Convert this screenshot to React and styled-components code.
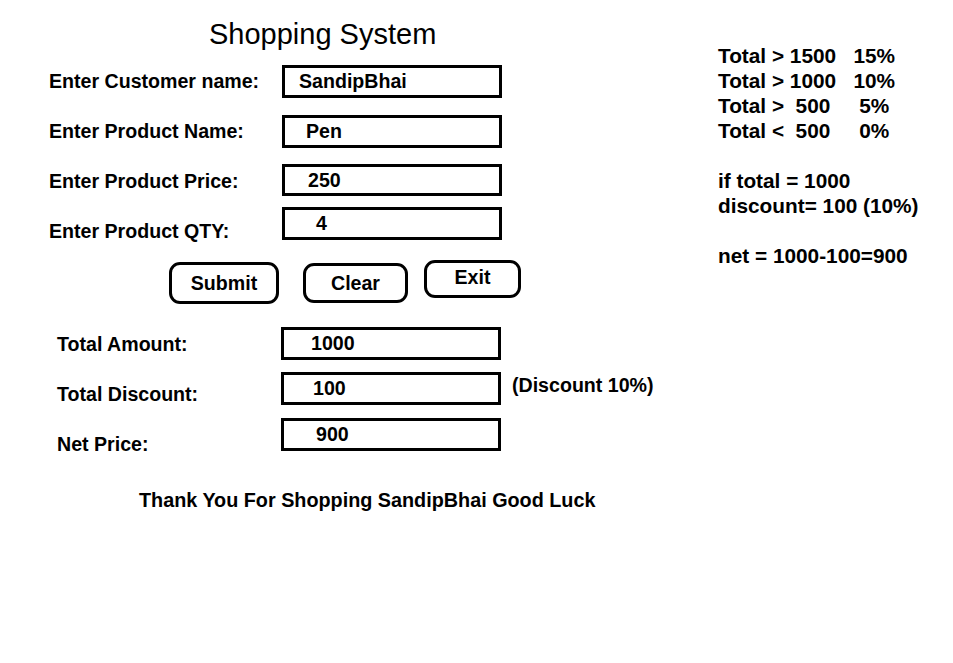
import React from 'react';
import styled, { createGlobalStyle } from 'styled-components';

const GlobalStyle = createGlobalStyle`
  html, body {
    margin: 0;
    padding: 0;
    background: #fff;
  }
  body {
    font-family: "Liberation Sans", Arial, sans-serif;
    color: #000;
  }
`;

const Page = styled.div`
  width: 953px;
  height: 663px;
  display: flex;
  background: #fff;
`;

const FormColumn = styled.div`
  width: 700px;
  display: flex;
  flex-direction: column;
`;

const Title = styled.h1`
  margin: 18px 0 6px 209px;
  height: 32px;
  font-size: 29px;
  line-height: 32px;
  font-weight: normal;
`;

const Row = styled.div`
  height: 50px;
  display: flex;
  align-items: center;
  padding-left: ${p => p.$indent}px;
`;

const Label = styled.span`
  width: ${p => p.$width}px;
  font-size: 19.6px;
  font-weight: bold;
`;

const Field = styled.div`
  width: 220px;
  height: ${p => p.$height || 33}px;
  box-sizing: border-box;
  border: 3px solid #000;
  display: flex;
  align-items: center;
  padding-left: ${p => p.$pad}px;
  font-size: 19.6px;
  font-weight: bold;
  transform: translateY(${p => p.$shift || 0}px);
`;

const Note = styled.span`
  margin-left: 11px;
  font-size: 19.6px;
  font-weight: bold;
  transform: translateY(-9px);
`;

const ButtonRow = styled.div`
  height: 63px;
  display: flex;
  align-items: flex-start;
  padding-left: 169px;
`;

const Button = styled.button`
  width: ${p => p.$w}px;
  height: ${p => p.$h}px;
  margin-top: ${p => p.$top}px;
  margin-left: ${p => p.$gap || 0}px;
  box-sizing: border-box;
  border: 3px solid #000;
  border-radius: 11px;
  background: #fff;
  font-family: "Liberation Sans", Arial, sans-serif;
  font-size: 19.6px;
  font-weight: bold;
  color: #000;
  padding: 0 0 ${p => p.$lift || 0}px;
`;

const Thanks = styled.p`
  margin: 18px 0 0 139px;
  font-size: 19.8px;
  font-weight: bold;
  line-height: 26px;
`;

const Rules = styled.div`
  padding: 43px 0 0 18px;
  font-size: 20.8px;
  font-weight: bold;
  line-height: 25px;
  white-space: pre;
`;

const RuleLine = styled.div`
  height: 25px;
`;

const inputs = [
  { label: 'Enter Customer name:', value: 'SandipBhai', pad: 14 },
  { label: 'Enter Product Name:', value: 'Pen', pad: 21 },
  { label: 'Enter Product Price:', value: '250', pad: 23, height: 32, shift: -1 },
  { label: 'Enter Product QTY:', value: '4', pad: 31, shift: -8 },
];

const results = [
  { label: 'Total Amount:', value: '1000', pad: 27, shift: -1 },
  { label: 'Total Discount:', value: '100', pad: 29, shift: -6, note: '(Discount 10%)' },
  { label: 'Net Price:', value: '900', pad: 32, shift: -10 },
];

const rules = [
  'Total > 1500   15%',
  'Total > 1000   10%',
  'Total >  500     5%',
  'Total <  500     0%',
  '',
  'if total = 1000',
  'discount= 100 (10%)',
  '',
  'net = 1000-100=900',
];

export default function App() {
  return (
    <Page>
      <GlobalStyle />
      <FormColumn>
        <Title>Shopping System</Title>
        {inputs.map(f => (
          <Row key={f.label} $indent={49}>
            <Label $width={233}>{f.label}</Label>
            <Field $pad={f.pad} $height={f.height} $shift={f.shift}>{f.value}</Field>
          </Row>
        ))}
        <ButtonRow>
          <Button $w={110} $h={42} $top={6}>Submit</Button>
          <Button $w={105} $h={40} $top={7} $gap={24}>Clear</Button>
          <Button $w={97} $h={38} $top={4} $gap={16} $lift={3}>Exit</Button>
        </ButtonRow>
        {results.map(f => (
          <Row key={f.label} $indent={57}>
            <Label $width={224}>{f.label}</Label>
            <Field $pad={f.pad} $shift={f.shift}>{f.value}</Field>
            {f.note && <Note>{f.note}</Note>}
          </Row>
        ))}
        <Thanks>Thank You For Shopping SandipBhai Good Luck</Thanks>
      </FormColumn>
      <Rules>
        {rules.map((r, i) => (
          <RuleLine key={i}>{r}</RuleLine>
        ))}
      </Rules>
    </Page>
  );
}
